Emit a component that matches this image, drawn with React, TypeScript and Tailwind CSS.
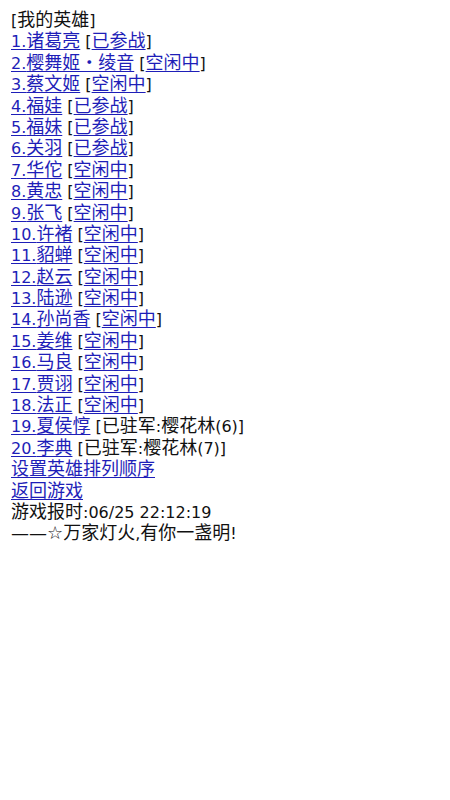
import React from "react";

const heroes: [string, string, boolean][] = [
  ["1.诸葛亮", "已参战", true],
  ["2.樱舞姬・绫音", "空闲中", true],
  ["3.蔡文姬", "空闲中", true],
  ["4.福娃", "已参战", true],
  ["5.福妹", "已参战", true],
  ["6.关羽", "已参战", true],
  ["7.华佗", "空闲中", true],
  ["8.黄忠", "空闲中", true],
  ["9.张飞", "空闲中", true],
  ["10.许褚", "空闲中", true],
  ["11.貂蝉", "空闲中", true],
  ["12.赵云", "空闲中", true],
  ["13.陆逊", "空闲中", true],
  ["14.孙尚香", "空闲中", true],
  ["15.姜维", "空闲中", true],
  ["16.马良", "空闲中", true],
  ["17.贾诩", "空闲中", true],
  ["18.法正", "空闲中", true],
  ["19.夏侯惇", "已驻军:樱花林(6)", false],
  ["20.李典", "已驻军:樱花林(7)", false],
];

const link = "text-[#1e1eb8] underline underline-offset-2";

function T({ s }: { s: string }) {
  const parts = s.split(/([\u2014\u2606\u3000-\u9fff\uff00-\uffef]+)/);
  return (
    <>
      {parts.map((p, i) =>
        p === "" ? null : i % 2 === 1 ? (
          <span key={i} className="text-[18px]">{p}</span>
        ) : (
          <React.Fragment key={i}>{p}</React.Fragment>
        )
      )}
    </>
  );
}

function Line({ children }: { children: React.ReactNode }) {
  return <div className="h-[21.4px] whitespace-nowrap">{children}</div>;
}

export default function App() {
  return (
    <div
      className="min-h-[800px] bg-white pl-[11px] pt-[9px] text-[16px] leading-[21.4px] text-[#111]"
      style={{ fontFamily: '"DejaVu Sans", "Noto Sans CJK SC", sans-serif' }}
    >
      <Line>[<T s="我的英雄" />]</Line>
      {heroes.map(([name, status, isLink]) => (
        <Line key={name}>
          <a href="#" className={link}><T s={name} /></a>{" "}
          [{isLink ? <a href="#" className={link}><T s={status} /></a> : <T s={status} />}]
        </Line>
      ))}
      <Line><a href="#" className={link}><T s="设置英雄排列顺序" /></a></Line>
      <Line><a href="#" className={link}><T s="返回游戏" /></a></Line>
      <Line><T s="游戏报时:06/25 22:12:19" /></Line>
      <Line><T s="——☆万家灯火,有你一盏明!" /></Line>
    </div>
  );
}
